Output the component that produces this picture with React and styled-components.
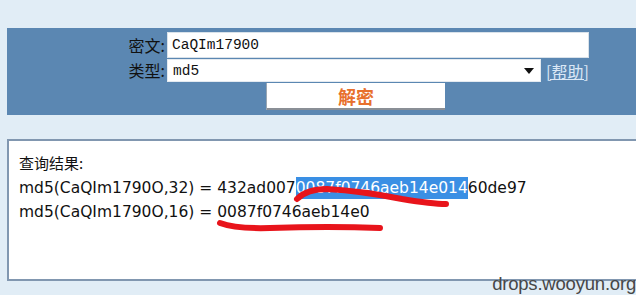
import styled, { createGlobalStyle } from 'styled-components'

const GlobalStyle = createGlobalStyle`
  html, body {
    margin: 0;
    padding: 0;
    background: #e1edf6;
  }
  body {
    width: 636px;
    height: 295px;
    overflow: hidden;
  }
`

const Page = styled.div`
  position: relative;
  width: 636px;
  height: 295px;
  padding: 28px 0 0 7px;
  box-sizing: border-box;
`

const Panel = styled.div`
  background: #5b87b2;
  height: 87px;
  box-sizing: border-box;
  padding-top: 4px;
  display: grid;
  grid-template-columns: 160px auto;
  grid-auto-rows: min-content;
  row-gap: 1px;
`

const Label = styled.div`
  font-family: "Noto Sans CJK SC", sans-serif;
  font-size: 16px;
  color: #111;
  text-align: right;
  padding-right: 2px;
  line-height: ${(p) => p.$h}px;
`

const Field = styled.div`
  display: flex;
  align-items: center;
  gap: 5px;
`

const TextInput = styled.input`
  width: 422px;
  height: 26px;
  box-sizing: border-box;
  border: 1px solid #d9e2ea;
  background: #fff;
  padding: 0 4px;
  font-family: "Liberation Mono", monospace;
  font-size: 14.5px;
  color: #111;
  outline: none;
`

const FakeSelect = styled.div`
  width: 374px;
  height: 23px;
  box-sizing: border-box;
  background: #fff;
  border: 1px solid #e4eaf0;
  display: flex;
  align-items: center;
  justify-content: space-between;
  padding: 0 6px 0 5px;
  font-family: "Liberation Mono", monospace;
  font-size: 14.5px;
  color: #111;
`

const Arrow = styled.span`
  width: 0;
  height: 0;
  border-left: 5px solid transparent;
  border-right: 5px solid transparent;
  border-top: 6px solid #111;
`

const HelpLink = styled.a`
  font-family: "Noto Sans CJK SC", sans-serif;
  font-size: 16px;
  color: #dbe8f6;
  text-decoration: underline;
  line-height: 20px;
`

const ButtonRow = styled.div`
  grid-column: 2;
  padding-left: 100px;
`

const SubmitButton = styled.button`
  width: 178px;
  height: 27px;
  background: #fff;
  border: none;
  border-bottom: 2px solid #8a8f96;
  box-shadow: -1px 0 0 #9aa6b2;
  font-family: "Noto Sans CJK SC", sans-serif;
  font-size: 18px;
  font-weight: bold;
  color: #e8702c;
  padding: 0;
  line-height: 24px;
`

const ResultBox = styled.div`
  position: relative;
  margin-top: 24px;
  height: 142px;
  box-sizing: border-box;
  background: #fff;
  border: 2px solid #8197b0;
  border-right: none;
  padding: 10px 0 0 10px;
  font-family: "DejaVu Sans", Verdana, sans-serif;
  font-size: 15.5px;
  color: #111;
`

const ResultLine = styled.div`
  line-height: 24.5px;
  white-space: nowrap;
  font-family: ${(p) => (p.$cjk ? '"Noto Sans CJK SC", sans-serif' : 'inherit')};
  font-size: ${(p) => (p.$cjk ? '15px' : 'inherit')};
`

const Selected = styled.span`
  background: #3a8fe4;
  color: #fff;
  display: inline-block;
  line-height: 22px;
`

const Marks = styled.svg`
  position: absolute;
  left: -2px;
  top: -2px;
  width: 629px;
  height: 142px;
  pointer-events: none;
`

const Watermark = styled.div`
  position: absolute;
  right: 0;
  bottom: 0;
  font-family: "Liberation Sans", Arial, sans-serif;
  font-size: 18.5px;
  color: #474747;
  letter-spacing: -0.2px;
  line-height: 22px;
`

export default function App() {
  return (
    <>
      <GlobalStyle />
      <Page>
        <Panel>
          <Label $h={26}>密文:</Label>
          <Field>
            <TextInput readOnly defaultValue="CaQIm17900" />
          </Field>
          <Label $h={23}>类型:</Label>
          <Field>
            <FakeSelect>
              <span>md5</span>
              <Arrow />
            </FakeSelect>
            <HelpLink href="#">[帮助]</HelpLink>
          </Field>
          <ButtonRow>
            <SubmitButton>解密</SubmitButton>
          </ButtonRow>
        </Panel>
        <ResultBox>
          <ResultLine $cjk>查询结果:</ResultLine>
          <ResultLine>
            md5(CaQIm1790O,32) = 432ad007<Selected>0087f0746aeb14e014</Selected>60de97
          </ResultLine>
          <ResultLine>md5(CaQIm1790O,16) = 0087f0746aeb14e0</ResultLine>
          <Marks viewBox="7 139 629 142">
            <path
              d="M297 199 Q 307 189 327 189 Q 362 191 402 199 Q 432 204 446 204"
              fill="none"
              stroke="#e8141b"
              strokeWidth="6"
              strokeLinecap="round"
            />
            <path
              d="M220 223 Q 236 229 270 228 Q 330 226 380 228"
              fill="none"
              stroke="#e8141b"
              strokeWidth="6"
              strokeLinecap="round"
            />
          </Marks>
        </ResultBox>
        <Watermark>drops.wooyun.org</Watermark>
      </Page>
    </>
  )
}
